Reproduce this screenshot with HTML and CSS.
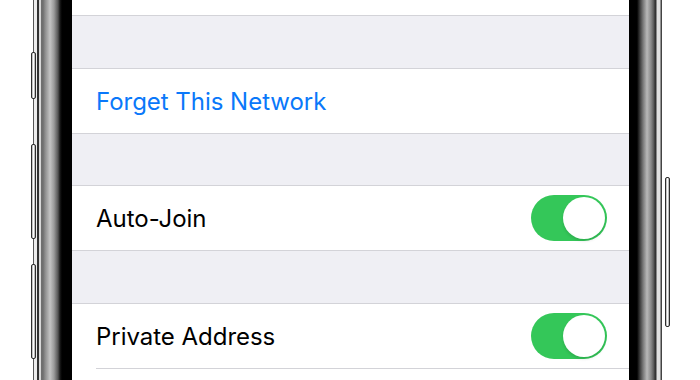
FILE: index.html
```html
<!DOCTYPE html>
<html>
<head>
<meta charset="utf-8">
<link rel="stylesheet" href="styles.css">
</head>
<body>
<div class="device">
  <div class="side side-left">
    <div class="hw-btn btn-silent"></div>
    <div class="hw-btn btn-vol-up"></div>
    <div class="hw-btn btn-vol-down"></div>
  </div>
  <div class="frame frame-left"></div>
  <div class="screen">
    <div class="row row-top"></div>
    <div class="gap gap-a"></div>
    <div class="row row-cell">
      <span class="label link">Forget This Network</span>
    </div>
    <div class="gap gap-b"></div>
    <div class="row row-cell">
      <span class="label">Auto-Join</span>
      <div class="toggle"><div class="knob"></div></div>
    </div>
    <div class="gap gap-a"></div>
    <div class="row row-cell row-last">
      <span class="label">Private Address</span>
      <div class="toggle"><div class="knob"></div></div>
    </div>
    <div class="inset-sep"></div>
    <div class="row-rest"></div>
  </div>
  <div class="frame frame-right"></div>
  <div class="side side-right">
    <div class="hw-btn btn-power"></div>
  </div>
</div>
</body>
</html>
```

FILE: styles.css
```css
html, body {
  margin: 0;
  padding: 0;
  background: #ffffff;
}
body {
  width: 700px;
  height: 380px;
  overflow: hidden;
  font-family: Inter, "Noto Sans", "Liberation Sans", sans-serif;
}
.device {
  display: flex;
  height: 380px;
}
.side {
  display: flex;
  flex-direction: column;
  position: relative;
  z-index: 2;
}
.side-left {
  width: 33px;
}
.side-right {
  width: 37px;
}
.hw-btn {
  box-sizing: border-box;
  border: 1px solid #2e2e2e;
  border-radius: 2px;
  background: linear-gradient(90deg, #a0a0a0, #f8f8f8 40%, #ffffff 60%, #909090);
}
.side-left .hw-btn {
  width: 5px;
  margin-left: 31px;
}
.btn-silent { margin-top: 52px; height: 47px; }
.btn-vol-up { margin-top: 45px; height: 95px; }
.btn-vol-down { margin-top: 25px; height: 95px; }
.btn-power {
  width: 5px;
  margin-left: 2px;
  margin-top: 177px;
  height: 150px;
}
.frame {
  flex: none;
}
.frame-left {
  width: 39px;
  background: linear-gradient(90deg, #555 0 1px, #ececec 1px 4px, #303030 4px 6px, #d8d8d8 6px 8px, #6f6f6f 8px 10px, #8c8c8c 12px, #c4c4c4 17px, #9a9a9a 21px, #555 25px, #1a1a1a 27px, #000 29px 39px);
}
.frame-right {
  width: 34px;
  background: linear-gradient(90deg, #000 0 8px, #2a2a2a 10px, #777 14px, #b8b8b8 18px, #8a8a8a 22px, #555 25px, #333 26px 27px, #e0e0e0 28px 31px, #444 32px 33px, #fff 33px);
}
.screen {
  width: 557px;
  flex: none;
  display: flex;
  flex-direction: column;
  background: #ffffff;
}
.row {
  background: #ffffff;
  box-sizing: border-box;
}
.row-top {
  height: 16px;
  border-bottom: 1px solid #d3d3d8;
}
.gap {
  background: #efeff4;
}
.gap-a { height: 52px; }
.gap-b { height: 51px; }
.row-cell {
  height: 66px;
  border-top: 1px solid #d3d3d8;
  border-bottom: 1px solid #d3d3d8;
  display: flex;
  align-items: center;
  justify-content: space-between;
  padding: 0 22px 0 24px;
}
.row-last {
  border-bottom: none;
  height: 65px;
}
.inset-sep {
  height: 1px;
  margin-left: 24px;
  background: #d3d3d8;
}
.row-rest {
  flex: 1;
}
.label {
  font-size: 24px;
  color: #000000;
  letter-spacing: -0.03px;
}
.label.link {
  color: #0a78fa;
}
.toggle {
  width: 76px;
  height: 46px;
  border-radius: 23px;
  background: #34c759;
  display: flex;
  justify-content: flex-end;
  align-items: center;
  padding: 0 2px;
  box-sizing: border-box;
}
.knob {
  width: 42px;
  height: 42px;
  border-radius: 50%;
  background: #ffffff;
  box-shadow: 0 2px 3px rgba(0, 0, 0, 0.12);
}
```
